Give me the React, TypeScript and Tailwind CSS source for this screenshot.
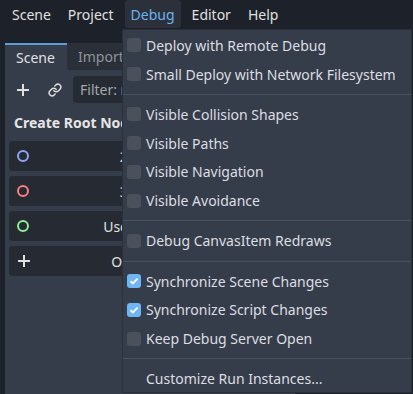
import { Link } from 'lucide-react'

const topMenus = ['Scene', 'Project', 'Debug', 'Editor', 'Help']

type Entry = { label: string; checked?: boolean; plain?: boolean } | 'sep'

const entries: Entry[] = [
  { label: 'Deploy with Remote Debug' },
  { label: 'Small Deploy with Network Filesystem' },
  'sep',
  { label: 'Visible Collision Shapes' },
  { label: 'Visible Paths' },
  { label: 'Visible Navigation' },
  { label: 'Visible Avoidance' },
  'sep',
  { label: 'Debug CanvasItem Redraws' },
  'sep',
  { label: 'Synchronize Scene Changes', checked: true },
  { label: 'Synchronize Script Changes', checked: true },
  { label: 'Keep Debug Server Open' },
  'sep',
  { label: 'Customize Run Instances...', plain: true },
]

const rootButtons = [
  { label: '2D Scene', color: '#8da5f3' },
  { label: '3D Scene', color: '#fc7f7f' },
  { label: 'User Interface', color: '#8eef97' },
  { label: 'Other Node', color: '' },
]

function Plus({ size = 14 }: { size?: number }) {
  return (
    <svg width={size} height={size} viewBox="0 0 14 14">
      <path d="M7 1v12M1 7h12" stroke="#e0e0e0" strokeWidth="2" />
    </svg>
  )
}

export default function App() {
  return (
    <div className="relative w-[413px] h-[394px] overflow-hidden bg-[#1d2129] font-['Noto_Sans',sans-serif] text-[14px] text-[#e0e0e0]">
      {/* menu bar */}
      <div className="h-[30px] flex items-start pl-[6px] gap-[5px]">
        {topMenus.map((m) => (
          <div
            key={m}
            className={
              m === 'Debug'
                ? 'h-[28px] px-[6px] flex items-center rounded-[3px] bg-[#2b303a] text-[#6cb3ee]'
                : 'h-[28px] px-[6px] flex items-center'
            }
          >
            {m}
          </div>
        ))}
      </div>

      {/* scene dock */}
      <div className="ml-[5px] pt-[13px] flex flex-col">
        <div className="h-[27px] flex">
          <div className="w-[62px] border-t-2 border-[#5c9fd8] bg-[#363d4a] pl-[11px] flex items-center">
            Scene
          </div>
          <div className="w-[70px] bg-[#2a2f38] pl-[11px] flex items-center text-[#8f949c]">
            Import
          </div>
        </div>
        <div className="w-[290px] h-[324px] bg-[#363d4a] pt-[6px] px-[4px]">
          <div className="h-[27px] flex items-center gap-[4px]">
            <div className="w-[28px] flex justify-center">
              <Plus />
            </div>
            <div className="w-[28px] flex justify-center">
              <Link size={14} strokeWidth={2.5} color="#e0e0e0" />
            </div>
            <div className="flex-1 h-[27px] rounded-[3px] bg-[#262b33] flex items-center pl-[7px] text-[#a4a8ae] whitespace-nowrap overflow-hidden">
              Filter: name, t:type, g:group
            </div>
          </div>
          <div className="mt-[10px] pl-[5px] leading-[20px] font-bold text-[#e6e6e6]">Create Root Node:</div>
          <div className="mt-[8px] flex flex-col gap-[5px]">
            {rootButtons.map((b) => (
              <div
                key={b.label}
                className="h-[30px] rounded-[3px] bg-[#262b33] grid grid-cols-[28px_1fr_28px] items-center"
              >
                <div className="pl-[8px] flex items-center">
                  {b.color ? (
                    <svg width="12" height="12" viewBox="0 0 12 12">
                      <circle cx="6" cy="6" r="5" fill="none" stroke={b.color} strokeWidth="2" />
                    </svg>
                  ) : (
                    <Plus />
                  )}
                </div>
                <div className="text-center whitespace-nowrap">{b.label}</div>
                <div />
              </div>
            ))}
          </div>
        </div>
      </div>

      {/* debug popup */}
      <div className="absolute left-[122px] top-[29px] w-[290px] h-[364px] bg-[#363d4a] border border-[#2a2f38] pt-[1px]">
        {entries.map((e, i) =>
          e === 'sep' ? (
            <div key={i} className="h-[11.4px] flex items-center">
              <div className="h-px w-full bg-[#4a5261]" />
            </div>
          ) : (
            <div key={i} className="h-[28.8px] flex items-center pl-[4px] text-[#dcdee2] whitespace-nowrap">
              {e.plain ? (
                <div className="w-[14px]" />
              ) : e.checked ? (
                <div className="w-[14px] h-[14px] rounded-[3px] bg-[#6fb6f5] flex items-center justify-center">
                  <svg width="10" height="10" viewBox="0 0 10 10">
                    <path d="M1.5 5.2l2.3 2.3L8.6 2.6" fill="none" stroke="#ffffff" strokeWidth="1.8" />
                  </svg>
                </div>
              ) : (
                <div className="w-[14px] h-[14px] rounded-[3px] bg-[#4b515b]" />
              )}
              <span className="ml-[5px]">{e.label}</span>
            </div>
          )
        )}
      </div>
    </div>
  )
}
